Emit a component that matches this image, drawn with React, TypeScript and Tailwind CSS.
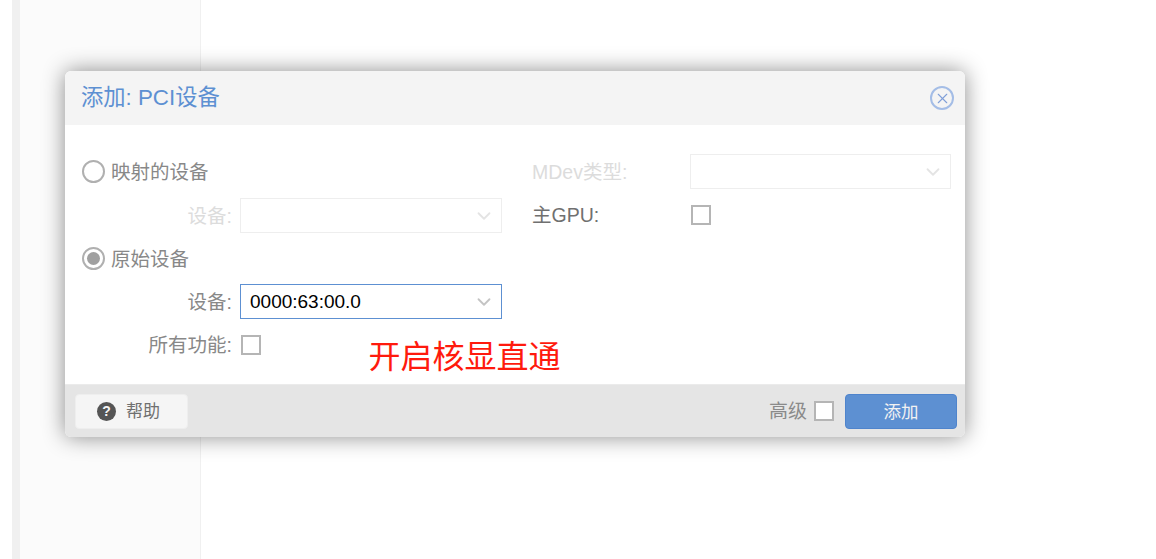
import React from 'react';
import { ChevronDown, X } from 'lucide-react';

const FONT = "font-['Liberation_Sans','Noto_Sans_CJK_SC',sans-serif]";

const Select = ({ value, disabled, focused }: { value?: string; disabled?: boolean; focused?: boolean }) => (
    <div
        className={`flex h-[35px] flex-1 items-center justify-between border pl-[9px] pr-[6px] text-[19px] text-black ${
            focused ? 'border-[#5d90d2]' : 'border-[#eeeeee]'
        }`}
    >
        <span className="pt-[1px]">{value}</span>
        <ChevronDown className={disabled ? 'text-[#e4e4e4]' : 'text-[#c4c4c4]'} size={22} strokeWidth={2} />
    </div>
);

const Checkbox = () => <div className="h-[20px] w-[20px] border-2 border-[#b5b5b5] bg-white" />;

const Radio = ({ checked }: { checked?: boolean }) => (
    <div className="ml-[1px] flex h-[23px] w-[23px] items-center justify-center rounded-full border-2 border-[#b0b0b0] bg-white">
        {checked && <div className="h-[13px] w-[13px] rounded-full bg-[#a0a0a0]" />}
    </div>
);

const Row = ({ label, muted, children }: { label: string; muted?: boolean; children: React.ReactNode }) => (
    <div className="flex h-[35px] items-center gap-[8px]">
        <span className={`w-[151px] pt-[2px] text-right text-[19.5px] ${muted ? 'text-[#dcdcdc]' : 'text-[#888888]'}`}>{label}</span>
        {children}
    </div>
);

const App: React.FC = () => {
    return (
        <div className={`flex h-[559px] w-[1156px] overflow-hidden bg-white ${FONT}`}>
            {/* page behind the dialog */}
            <div className="ml-[12px] w-[8px] bg-[#f0f0f0]" />
            <div className="w-[181px] border-r border-[#f0f0f0] bg-[#fbfbfb]" />

            {/* dialog */}
            <div className="absolute left-[65px] top-[71px] flex h-[366px] w-[900px] flex-col overflow-hidden rounded-[6px] bg-white shadow-[0_0_22px_rgba(0,0,0,0.45)]">
                <div className="flex h-[54px] items-center justify-between bg-[#f4f4f4] pl-[16px] pr-[11px]">
                    <span className="text-[22.3px] text-[#5d90d2]">添加: PCI设备</span>
                    <div className="flex h-[24px] w-[24px] items-center justify-center rounded-full border-2 border-[#a4bde6] text-[#7f9fd8]">
                        <X size={17} strokeWidth={1.5} />
                    </div>
                </div>

                <div className="relative flex flex-1 gap-[30px] pl-[16px] pr-[14px] pt-[29px]">
                    <div className="flex w-[421px] flex-col gap-[8px]">
                        <div className="flex h-[35px] items-center gap-[6px] text-[19.5px] text-[#888888]">
                            <Radio />
                            <span className="pt-[2px]">映射的设备</span>
                        </div>
                        <div className="mt-[1px]">
                            <Row label="设备:" muted>
                                <Select disabled />
                            </Row>
                        </div>
                        <div className="flex h-[35px] items-center gap-[6px] text-[19.5px] text-[#888888]">
                            <Radio checked />
                            <span className="pt-[2px]">原始设备</span>
                        </div>
                        <Row label="设备:">
                            <Select value="0000:63:00.0" focused />
                        </Row>
                        <Row label="所有功能:">
                            <div className="ml-[1px]">
                                <Checkbox />
                            </div>
                        </Row>
                    </div>

                    <div className="flex flex-1 flex-col gap-[8px]">
                        <div className="flex h-[35px] items-center">
                            <span className="w-[158px] pt-[2px] text-[19.5px] text-[#dcdcdc]">MDev类型:</span>
                            <Select disabled />
                        </div>
                        <div className="flex h-[35px] items-center">
                            <span className="w-[159px] pt-[2px] text-[19.5px] text-[#707070]">主GPU:</span>
                            <Checkbox />
                        </div>
                    </div>

                    {/* red annotation on top of the form */}
                    <span className="absolute left-[303.5px] top-[210px] text-[32px] leading-[44px] text-[#ff1a0d]">开启核显直通</span>
                </div>

                <div className="flex h-[53px] items-center justify-between border-t border-[#ebebeb] bg-[#e5e5e5] pl-[10px] pr-[8px]">
                    <button className="flex h-[35px] w-[113px] items-center gap-[10px] rounded-[4px] border border-[#eeeeee] bg-[#f5f5f5] pl-[21px] text-[17px] text-[#707070]">
                        <span className="flex h-[19px] w-[19px] items-center justify-center rounded-full bg-[#555555] text-[14px] font-bold text-[#f5f5f5]">?</span>
                        <span className="pt-[2px]">帮助</span>
                    </button>
                    <div className="flex items-center">
                        <span className="pt-[2px] text-[19px] text-[#8a8a8a]">高级</span>
                        <div className="ml-[7px] mr-[11px]">
                            <Checkbox />
                        </div>
                        <button className="h-[35px] w-[112px] rounded-[4px] border border-[#4f84cc] bg-[#5d90d2] pt-[2px] text-[17.5px] text-[#f2f2f2]">添加</button>
                    </div>
                </div>
            </div>
        </div>
    );
};

export default App;
